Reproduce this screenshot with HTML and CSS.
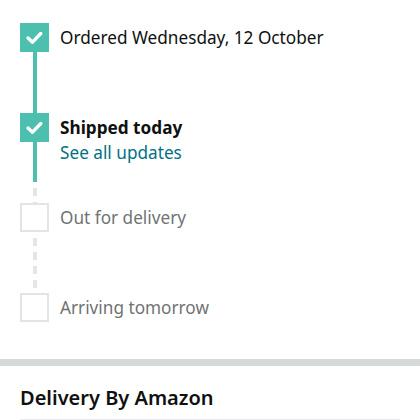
FILE: index.html
```html
<!DOCTYPE html>
<html lang="en">
<head>
<meta charset="utf-8">
<title>Tracking</title>
<link rel="stylesheet" href="styles.css">
</head>
<body>
<ol class="timeline">
  <li class="step done">
    <div class="rail">
      <span class="box"><svg viewBox="0 0 29 29" width="29" height="29"><path d="M8 15 L12.5 19.2 L20.8 10.5" fill="none" stroke="#fff" stroke-width="3.4" stroke-linecap="round" stroke-linejoin="round"/></svg></span>
      <span class="line solid"></span>
    </div>
    <div class="text">
      <p class="title">Ordered Wednesday, 12 October</p>
    </div>
  </li>
  <li class="step done">
    <div class="rail">
      <span class="box"><svg viewBox="0 0 29 29" width="29" height="29"><path d="M8 15 L12.5 19.2 L20.8 10.5" fill="none" stroke="#fff" stroke-width="3.4" stroke-linecap="round" stroke-linejoin="round"/></svg></span>
      <span class="line solid short"></span>
      <span class="line dashed"></span>
    </div>
    <div class="text">
      <p class="title strong">Shipped today</p>
      <a class="link" href="#">See all updates</a>
    </div>
  </li>
  <li class="step pending">
    <div class="rail">
      <span class="box"></span>
      <span class="line dashed"></span>
    </div>
    <div class="text">
      <p class="title muted">Out for delivery</p>
    </div>
  </li>
  <li class="step pending last">
    <div class="rail">
      <span class="box"></span>
    </div>
    <div class="text">
      <p class="title muted">Arriving tomorrow</p>
    </div>
  </li>
</ol>
<section class="delivery">
  <h2 class="heading">Delivery By Amazon</h2>
</section>
</body>
</html>
```

FILE: styles.css
```css
* { box-sizing: border-box; }
html, body { margin: 0; padding: 0; background: #fff; }
body {
  font-family: "Noto Sans", "Open Sans", sans-serif;
  color: #0f1111;
  width: 420px;
  overflow: hidden;
}
.timeline {
  list-style: none;
  margin: 0;
  padding: 23px 20px 37px 20px;
}
.step {
  display: grid;
  grid-template-columns: 29px 1fr;
  column-gap: 11px;
  height: 90px;
}
.step.last { height: 29px; }
.rail {
  display: flex;
  flex-direction: column;
  align-items: center;
}
.box {
  width: 29px;
  height: 29px;
  flex: none;
  display: block;
}
.box svg { display: block; }
.done .box { background: #4cbfae; }
.pending .box { border: 2.5px solid #e3e5e5; background: #fff; }
.line { width: 4px; display: block; }
.line.solid { background: #4cbfae; flex: 1; }
.line.solid.short { flex: none; height: 40px; }
.line.dashed {
  flex: 1;
  background: repeating-linear-gradient(to bottom, transparent 0 6px, #e3e6e6 6px 14px);
}
.title {
  margin: 0;
  font-size: 17.2px;
  line-height: 29px;
  color: #0f1111;
}
.title.strong { font-weight: 700; }
.title.muted { color: #6f7373; }
.link {
  display: block;
  font-size: 17.2px;
  line-height: 22px;
  color: #007185;
  text-decoration: none;
}
.delivery {
  border-top: 7px solid #d5d9d9;
  padding: 0 20px;
}
.heading {
  margin: 0;
  padding: 19px 0 8px;
  font-size: 20px;
  line-height: 26px;
  font-weight: 600;
  color: #0f1111;
  border-bottom: 1px solid #e7e9ec;
}
```
